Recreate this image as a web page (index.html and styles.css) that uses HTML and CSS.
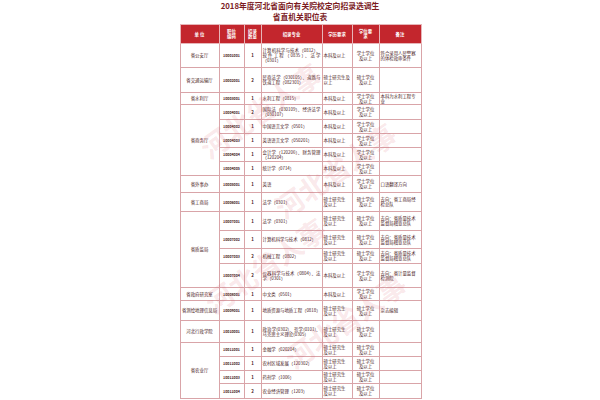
FILE: index.html
```html
<!DOCTYPE html>
<html lang="zh">
<head>
<meta charset="utf-8">
<link rel="stylesheet" href="styles.css">
</head>
<body>
<div class="page">
  <div class="sheet">
    <h1 class="title"><span class="tl">2018年度河北省面向有关院校定向招录选调生</span><span class="tl">省直机关职位表</span></h1>
    <table class="grid">
      <colgroup>
        <col class="c1"><col class="c2"><col class="c3"><col class="c4"><col class="c5"><col class="c6"><col class="c7">
      </colgroup>
      <thead>
        <tr class="r19">
          <th>单 位</th><th>职位<br>编码</th><th>招录<br>数量</th><th>招录专业</th><th>学历要求</th><th>学位要<br>求</th><th>备注</th>
        </tr>
      </thead>
      <tbody>
        <tr class="r24"><td class="u">省公安厅</td><td class="k">10001001</td><td class="n">1</td><td class="m">计算机科学与技术（0812）、软件工程（0835）、法学（0301）</td><td class="e">本科及以上</td><td class="d">学士学位<br>及以上</td><td class="b">符合录用人民警察的体检政审条件</td></tr>
        <tr class="r25"><td class="u">省交通运输厅</td><td class="k">10002001</td><td class="n">2</td><td class="m">民商法学（030105）、道路与铁道工程（082301）</td><td class="e">硕士研究生及以上</td><td class="d">硕士学位<br>及以上</td><td class="b"></td></tr>
        <tr class="r12"><td class="u">省水利厅</td><td class="k">10003001</td><td class="n">1</td><td class="m">水利工程（0815）</td><td class="e">本科及以上</td><td class="d">学士学位<br>及以上</td><td class="b">本科为水利工程专业</td></tr>
        <tr class="r15"><td class="u" rowspan="5">省商务厅</td><td class="k">10004001</td><td class="n">2</td><td class="m">国际法（030109）、经济法学（030107）</td><td class="e">本科及以上</td><td class="d">学士学位<br>及以上</td><td class="b"></td></tr>
        <tr class="r14"><td class="k">10004002</td><td class="n">1</td><td class="m">中国语言文学（0501）</td><td class="e">本科及以上</td><td class="d">学士学位<br>及以上</td><td class="b"></td></tr>
        <tr class="r14"><td class="k">10004003</td><td class="n">1</td><td class="m">英语语言文学（050201）</td><td class="e">本科及以上</td><td class="d">学士学位<br>及以上</td><td class="b"></td></tr>
        <tr class="r14"><td class="k">10004004</td><td class="n">1</td><td class="m">会计学（120206）、财务管理（120204）</td><td class="e">本科及以上</td><td class="d">学士学位<br>及以上</td><td class="b"></td></tr>
        <tr class="r14"><td class="k">10004005</td><td class="n">1</td><td class="m">统计学（0714）</td><td class="e">本科及以上</td><td class="d">学士学位<br>及以上</td><td class="b"></td></tr>
        <tr class="r17"><td class="u">省外事办</td><td class="k">10005001</td><td class="n">1</td><td class="m">英语</td><td class="e">本科及以上</td><td class="d">学士学位<br>及以上</td><td class="b">口语翻译方向</td></tr>
        <tr class="r19"><td class="u">省工商局</td><td class="k">10006001</td><td class="n">1</td><td class="m">法学（0301）</td><td class="e">硕士研究生<br>及以上</td><td class="d">硕士学位<br>及以上</td><td class="b">去向：省工商局经检总队</td></tr>
        <tr class="r19"><td class="u" rowspan="4">省质监局</td><td class="k">10007001</td><td class="n">1</td><td class="m">法学（0301）</td><td class="e">硕士研究生<br>及以上</td><td class="d">硕士学位<br>及以上</td><td class="b">去向：省质量技术监督局稽查总队</td></tr>
        <tr class="r18"><td class="k">10007002</td><td class="n">1</td><td class="m">计算机科学与技术（0812）</td><td class="e">硕士研究生<br>及以上</td><td class="d">硕士学位<br>及以上</td><td class="b">去向：省质量技术监督局稽查总队</td></tr>
        <tr class="r15"><td class="k">10007003</td><td class="n">2</td><td class="m">机械工程（0802）</td><td class="e">硕士研究生<br>及以上</td><td class="d">硕士学位<br>及以上</td><td class="b">去向：省质量技术监督局稽查总队</td></tr>
        <tr class="r24"><td class="k">10007004</td><td class="n">2</td><td class="m">仪器科学与技术（0804）、法学（0301）</td><td class="e">本科及以上</td><td class="d">学士学位<br>及以上</td><td class="b">去向：省计量监督检测院</td></tr>
        <tr class="r13"><td class="u">省政府研究室</td><td class="k">10008001</td><td class="n">1</td><td class="m">中文类（0501）</td><td class="e">本科及以上</td><td class="d">学士学位<br>及以上</td><td class="b"></td></tr>
        <tr class="r20"><td class="u">省测绘地理信息局</td><td class="k">10009001</td><td class="n">1</td><td class="m">地质资源与地质工程（0818）</td><td class="e">硕士研究生<br>及以上</td><td class="d">硕士学位<br>及以上</td><td class="b">杂志编辑</td></tr>
        <tr class="r22"><td class="u">河北行政学院</td><td class="k">10010001</td><td class="n">1</td><td class="m">政治学(0302)、哲学(0101)、马克思主义理论(0305)</td><td class="e">硕士研究生<br>及以上</td><td class="d">硕士学位<br>及以上</td><td class="b"></td></tr>
        <tr class="r14"><td class="u" rowspan="4">省农业厅</td><td class="k">10011001</td><td class="n">1</td><td class="m">金融学（020204）</td><td class="e">硕士研究生<br>及以上</td><td class="d">硕士学位<br>及以上</td><td class="b"></td></tr>
        <tr class="r14"><td class="k">10011002</td><td class="n">1</td><td class="m">农村区域发展（120302）</td><td class="e">硕士研究生<br>及以上</td><td class="d">硕士学位<br>及以上</td><td class="b"></td></tr>
        <tr class="r13"><td class="k">10011003</td><td class="n">1</td><td class="m">药剂学（1006）</td><td class="e">硕士研究生<br>及以上</td><td class="d">硕士学位<br>及以上</td><td class="b"></td></tr>
        <tr class="r15"><td class="k">10011004</td><td class="n">2</td><td class="m">农业经济管理（1203）</td><td class="e">硕士研究生<br>及以上</td><td class="d">硕士学位<br>及以上</td><td class="b"></td></tr>
      </tbody>
    </table>
    <div class="marks" aria-hidden="true">
      <span class="wm w1">河北省人事</span>
      <span class="wm w2">河北省人事</span>
      <span class="wm w3">河北省人事</span>
      <span class="wm w4">河北省人事</span>
    </div>
  </div>
</div>
</body>
</html>
```

FILE: styles.css
```css
html, body {
  margin: 0;
  padding: 0;
  background: #ffffff;
}
.page {
  width: 600px;
  height: 400px;
  overflow: hidden;
  display: flex;
  justify-content: center;
}
.sheet {
  position: relative;
  width: 241px;
  padding-top: 0;
}
.title {
  margin: 0 -20px 2px -20px;
  font-family: "Noto Sans CJK SC", sans-serif;
  font-weight: 700;
  font-size: 7.8px;
  color: #7c1c1f;
  text-align: center;
  white-space: nowrap;
  display: flex;
  flex-direction: column;
  align-items: center;
}
.tl {
  display: block;
  height: 11px;
  line-height: 11px;
}
.grid {
  width: 241px;
  border-collapse: collapse;
  table-layout: fixed;
  font-family: "Noto Sans CJK SC", sans-serif;
  font-size: 4.4px;
  line-height: 5px;
  color: #4a1a1c;
}
.c1 { width: 39px; }
.c2 { width: 25px; }
.c3 { width: 17px; }
.c4 { width: 61px; }
.c5 { width: 30px; }
.c6 { width: 27px; }
.c7 { width: 42px; }
.grid th {
  background: #c3262d;
  color: #ffffff;
  font-weight: 700;
  border: 1px solid #e7b5b8;
  padding: 0;
  text-align: center;
  vertical-align: middle;
}
.grid td {
  border: 1px solid #d9a4a8;
  padding: 0 1px;
  vertical-align: middle;
}
.u { text-align: center; }
.k { text-align: center; font-weight: 700; font-size: 3.6px; }
.n { text-align: center; font-weight: 700; }
.m { text-align: justify; }
.e { text-align: left; }
.d { text-align: center; }
.b { text-align: left; }
.r12 { height: 12px; }
.r13 { height: 13px; }
.r14 { height: 14px; }
.r15 { height: 15px; }
.r17 { height: 17px; }
.r18 { height: 18px; }
.r19 { height: 19px; }
.r20 { height: 20px; }
.r22 { height: 22px; }
.r24 { height: 24px; }
.r25 { height: 25px; }
.marks {
  position: absolute;
  inset: 0;
  pointer-events: none;
}
.wm {
  position: absolute;
  font-family: "Noto Sans CJK SC", sans-serif;
  font-size: 28px;
  font-weight: 700;
  color: rgba(215, 90, 105, 0.15);
  white-space: nowrap;
  transform: rotate(-35deg);
}
.w1 { left: 10px; top: 90px; }
.w2 { left: 85px; top: 150px; }
.w3 { left: 15px; top: 245px; }
.w4 { left: 95px; top: 300px; }
```
